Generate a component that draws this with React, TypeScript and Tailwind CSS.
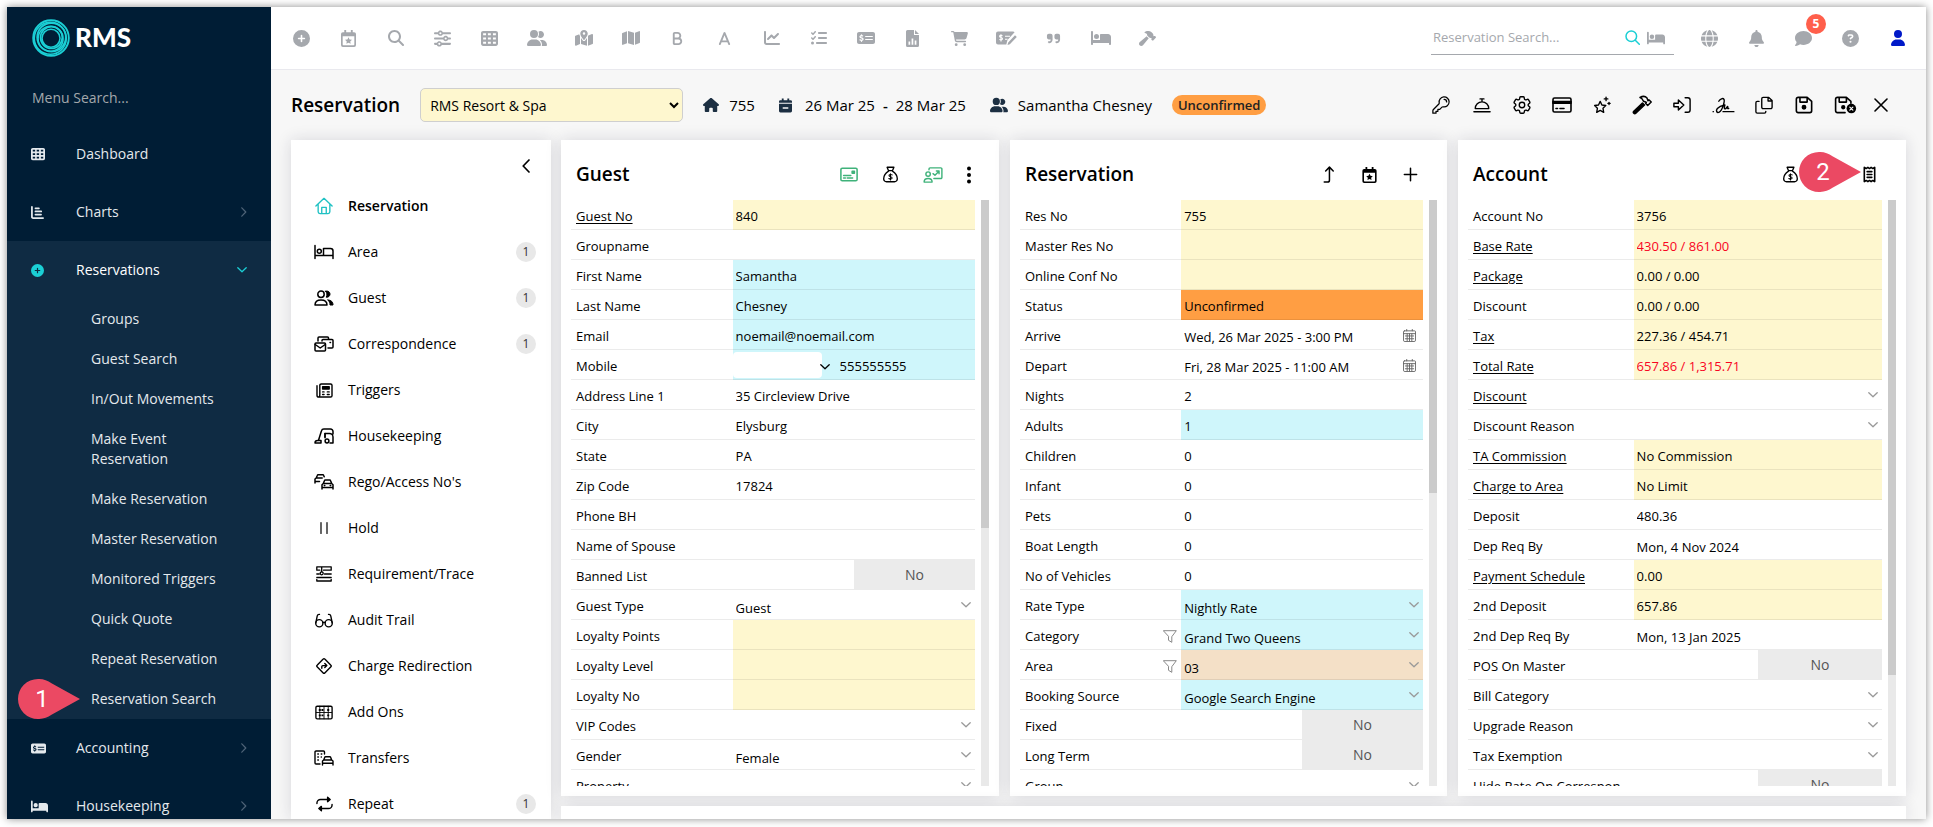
import React from 'react';
import {
    FaA,
    FaB,
    FaBed,
    FaBell,
    FaCartShopping,
    FaChartLine,
    FaCirclePlus,
    FaCircleQuestion,
    FaComment,
    FaGlobe,
    FaHammer,
    FaHouse,
    FaListCheck,
    FaMagnifyingGlass,
    FaMap,
    FaMapLocationDot,
    FaMoneyCheckDollar,
    FaQuoteRight,
    FaSliders,
    FaTableCells,
    FaUser,
    FaUserGroup,
} from 'react-icons/fa6';
import { HiOutlineCog6Tooth, HiOutlineKey } from 'react-icons/hi2';

type IconProps = { className?: string };

// Line icon on a 20x20 grid
const Line: React.FC<{ className?: string; width?: number; box?: string; children: React.ReactNode }> = ({
    className = 'size-5',
    width = 1.5,
    box = '0 0 20 20',
    children,
}) => (
    <svg
        className={className}
        viewBox={box}
        fill="none"
        stroke="currentColor"
        strokeWidth={width}
        strokeLinecap="round"
        strokeLinejoin="round"
        aria-hidden="true"
    >
        {children}
    </svg>
);

const ChevronDown: React.FC<IconProps> = ({ className }) => (
    <Line className={className} box="0 0 10 6" width={1.3}>
        <path d="M.8.8 5 4.8 9.2.8" />
    </Line>
);

const ChevronRight: React.FC<IconProps> = ({ className }) => (
    <Line className={className} box="0 0 6 10" width={1.2}>
        <path d="M.8.8 4.8 5 .8 9.2" />
    </Line>
);

const CalendarStar: React.FC<IconProps> = ({ className }) => (
    <svg className={className} viewBox="0 0 16 18" fill="currentColor" aria-hidden="true">
        <path
            fillRule="evenodd"
            d="M3.5 0h2v2.2h5V0h2v2.2H14a2 2 0 0 1 2 2V16a2 2 0 0 1-2 2H2a2 2 0 0 1-2-2V4.200a2 2 0 0 1 2-2h1.500zM1.800 6.500v9a.7.7 0 0 0 .7.7h11a.7.7 0 0 0 .7-.7v-9zM8 7.600l1.150 2.350 2.550.35-1.850 1.800.45 2.550L8 13.450l-2.300 1.200.45-2.550L4.300 10.300l2.550-.35z"
        />
    </svg>
);

const CalendarMinus: React.FC<IconProps> = ({ className }) => (
    <svg className={className} viewBox="0 0 14 15" fill="currentColor" aria-hidden="true">
        <path fillRule="evenodd" d="M3 0h2v1.800h4V0h2v1.800h1.500A1.500 1.500 0 0 1 14 3.300V4.500H0V3.300a1.500 1.500 0 0 1 1.500-1.500H3zM0 5.500h14v8a1.500 1.500 0 0 1-1.500 1.500h-11A1.500 1.500 0 0 1 0 13.500zm4 4v1.600h6V9.500z" />
    </svg>
);

const FileChart: React.FC<IconProps> = ({ className }) => (
    <svg className={className} viewBox="0 0 13 17" fill="currentColor" aria-hidden="true">
        <path fillRule="evenodd" d="M1.500 0H8v5h5v10.500a1.500 1.500 0 0 1-1.500 1.500h-10A1.500 1.500 0 0 1 0 15.500v-14A1.500 1.500 0 0 1 1.500 0zM9 0l4 4H9zM2.500 11.500v3.200h1.700v-3.200zm3.100-3v6.200h1.700V8.500zm3.100 2v4.200h1.700v-4.200z" />
    </svg>
);

const CheckPen: React.FC<IconProps> = ({ className }) => (
    <svg className={className} viewBox="0 0 21 16" aria-hidden="true">
        <path fill="currentColor" d="M2 1.500h15a2 2 0 0 1 1.600.8L11.500 10l-1.200 4.500H2a2 2 0 0 1-2-2v-9a2 2 0 0 1 2-2zM19 5.200l1.800 1.700-7 7.300-2.300.9.700-2.500z" />
        <path d="M6.500 5.700C5.300 4.900 3.500 5.200 3.600 6.400c.1 1.500 2.900.8 2.900 2.300 0 1.300-2 1.500-3.100.7M5 4.200v7.200M9 6.200h5M9 9.200h2.500" stroke="white" strokeWidth="1.100" fill="none" />
    </svg>
);

const BarsAxis: React.FC<IconProps> = ({ className }) => (
    <Line className={className} box="0 0 14 14" width={1.9}>
        <path d="M1 1v10.500A1.300 1.300 0 0 0 2.300 13H13M4.800 2.500h3.700M4.800 5.800H11M4.800 9.200h6" />
    </Line>
);

const MoneyBag: React.FC<IconProps> = ({ className }) => (
    <Line className={className} width={1.6}>
        <path d="M6 1.500h8L12.300 5.500H7.700zM7.700 6C4.500 8 2 11.500 2 15a3.300 3.300 0 0 0 3.300 3.500h9.400A3.300 3.300 0 0 0 18 15c0-3.500-2.500-7-5.700-9" />
        <path d="M12 10.500c-1.300-1-3.800-.8-3.800.8 0 1.800 3.700 1 3.700 2.700 0 1.500-2.600 1.700-3.900.7M10 9v7.500" strokeWidth="1.200" />
    </Line>
);

const IdCard: React.FC<IconProps> = ({ className }) => (
    <Line className={className} box="0 0 20 16" width={1.7}>
        <rect x="1" y="1" width="18" height="14" rx="1.500" />
        <path d="M4 9.200h8M4 11.800h2M8 11.800h6" />
        <path d="M13.500 4.500h2.500v2h-2.500z" fill="currentColor" />
    </Line>
);

const Presenter: React.FC<IconProps> = ({ className }) => (
    <Line className={className} box="0 0 22 18" width={1.6}>
        <path d="M6.500 3V2.200A1.200 1.200 0 0 1 7.700 1h12.100A1.200 1.200 0 0 1 21 2.200v9.600a1.200 1.200 0 0 1-1.200 1.200H12M11 7.500l2.200 1.800L17.500 5M14.800 4.500h3v3" />
        <circle cx="5.500" cy="8" r="2.500" />
        <path d="M1 17c0-2.500 1.500-4 4.500-4s4.500 1.500 4.500 4z" />
    </Line>
);

const Dots: React.FC<IconProps> = ({ className }) => (
    <svg className={className} viewBox="0 0 4 18" fill="currentColor" aria-hidden="true">
        <circle cx="2" cy="2.500" r="2" />
        <circle cx="2" cy="9" r="2" />
        <circle cx="2" cy="15.500" r="2" />
    </svg>
);

const Receipt: React.FC<IconProps> = ({ className }) => (
    <Line className={className} box="0 0 14 18" width={1.7}>
        <path d="M1.500 1.500l2 1.200 1.800-1.200L7 2.700l1.700-1.200 1.800 1.200 2-1.200v15l-2-1.200-1.800 1.200L7 15.300l-1.700 1.200-1.800-1.200-2 1.200z" />
        <path d="M4.500 6h5M4.500 9h5M4.500 12h5" />
    </Line>
);

const BedOutline: React.FC<IconProps> = ({ className }) => (
    <Line className={className} box="0 0 20 16" width={1.5}>
        <path d="M1 1.500v13M1 11.500h18M19 14.500V7a2.500 2.500 0 0 0-2.500-2.500H9.500v7" />
        <circle cx="5.300" cy="7.200" r="2" />
    </Line>
);

const toolbarIcons: { label: string; icon: React.ReactNode }[] = [
    { label: 'Add', icon: <FaCirclePlus className="size-[17px]" /> },
    { label: 'Events', icon: <CalendarStar className="h-[17px] w-[15px]" /> },
    { label: 'Search', icon: <FaMagnifyingGlass className="size-4" /> },
    { label: 'Filters', icon: <FaSliders className="size-[17px]" /> },
    { label: 'Grid', icon: <FaTableCells className="size-[17px]" /> },
    { label: 'Guests', icon: <FaUserGroup className="size-5" /> },
    { label: 'Locations', icon: <FaMapLocationDot className="size-[18px]" /> },
    { label: 'Map', icon: <FaMap className="size-[18px]" /> },
    { label: 'Book', icon: <FaB className="size-[15px]" /> },
    { label: 'Availability', icon: <FaA className="size-[15px]" /> },
    { label: 'Statistics', icon: <FaChartLine className="size-4" /> },
    { label: 'Tasks', icon: <FaListCheck className="size-4" /> },
    { label: 'Payments', icon: <FaMoneyCheckDollar className="size-[18px]" /> },
    { label: 'Reports', icon: <FileChart className="h-[17px] w-[13px]" /> },
    { label: 'Point of sale', icon: <FaCartShopping className="size-[17px]" /> },
    { label: 'Cheques', icon: <CheckPen className="h-4 w-[21px]" /> },
    { label: 'Quotes', icon: <FaQuoteRight className="size-[15px]" /> },
    { label: 'Rooms', icon: <FaBed className="size-5" /> },
    { label: 'Maintenance', icon: <FaHammer className="size-[17px]" /> },
];

const subMenu = [
    'Groups',
    'Guest Search',
    'In/Out Movements',
    'Make Event Reservation',
    'Make Reservation',
    'Master Reservation',
    'Monitored Triggers',
    'Quick Quote',
    'Repeat Reservation',
    'Reservation Search',
];

const sections: { label: string; count?: number; icon: React.ReactNode }[] = [
    {
        label: 'Reservation',
        icon: (
            <Line className="size-[18px] text-[#1fc1c3]">
                <path d="M1 10 10 1.500 19 10M3.500 8v8.500a2 2 0 0 0 2 2h9a2 2 0 0 0 2-2V8M7.500 18v-6.500h5V18" />
            </Line>
        ),
    },
    { label: 'Area', count: 1, icon: <BedOutline className="h-4 w-5" /> },
    {
        label: 'Guest',
        count: 1,
        icon: (
            <Line className="h-4 w-5" box="0 0 20 16">
                <circle cx="7" cy="4.200" r="3.200" />
                <path d="M1 15c0-3 2-5 6-5s6 2 6 5z" />
                <path d="M11.500 1.200c3.500-.8 4.500 1.500 4.500 3s-1.500 3.500-3.800 3C13.500 5 13 2.500 11.500 1.200zM14 10c3.500.2 5 2 5 5h-3c0-2-.5-3.500-2-5z" fill="currentColor" strokeWidth="1" />
            </Line>
        ),
    },
    {
        label: 'Correspondence',
        count: 1,
        icon: (
            <Line className="h-4 w-5" box="0 0 20 16">
                <path d="M4 5V2a1 1 0 0 1 1-1h8.500a1 1 0 0 1 1 1v1.500M8 5V4.500a1 1 0 0 1 1-1h9a1 1 0 0 1 1 1V11a1 1 0 0 1-1 1h-4M16 6.500h.5" />
                <rect x="1" y="7" width="10.500" height="8" rx="1" />
                <path d="m1.200 8.500 5 3.500 5-3.500" />
            </Line>
        ),
    },
    {
        label: 'Triggers',
        icon: (
            <Line className="h-[15px] w-[17px]" box="0 0 18 16">
                <path d="M1 3v10a2 2 0 0 0 2 2h12.500a1.500 1.500 0 0 0 1.500-1.500v-11A1.500 1.500 0 0 0 15.500 1h-10A1.500 1.500 0 0 0 4 2.500V13a2 2 0 0 1-1.500 2" />
                <path d="M7 4h7v2.500H7z" fill="currentColor" />
                <path d="M7 9.500h1.500M12 9.500h2M7 12.300h1.500M12 12.300h2" />
            </Line>
        ),
    },
    {
        label: 'Housekeeping',
        icon: (
            <Line className="h-4 w-5" box="0 0 20 16">
                <path d="M1 15c0-1.500 1-2.500 2.500-2.500H7V15zM4.500 12.300 7.500 2.800A2.500 2.500 0 0 1 10 1h6.500A2.500 2.500 0 0 1 19 3.500V6M11 9V5.500h4.500A3.500 3.500 0 0 1 19 9v6h-3" />
                <path d="M11 5.500v4.200" />
                <circle cx="13" cy="13" r="1.900" />
            </Line>
        ),
    },
    {
        label: "Rego/Access No's",
        icon: (
            <Line className="h-4 w-5" box="0 0 20 16">
                <path d="M1 9V5l1.200-1L3.300 1.500A1 1 0 0 1 4.200.8h4.500a1 1 0 0 1 1 .7l.5 1.300M2.200 4h6M1 7.500h4.500" />
                <path d="M8 15v-4.300l1.300-1.200 1.100-2.800a1 1 0 0 1 1-.7h4.200a1 1 0 0 1 1 .7l1.100 2.800L19 10.700V15M9.300 9.500h8.400M8 13.500h11M10.300 11.500h.5M16.200 11.500h.5" />
            </Line>
        ),
    },
    {
        label: 'Hold',
        icon: (
            <Line className="h-3 w-2" box="0 0 8 12" width={1.2}>
                <path d="M1 .6v10.800M7 .6v10.800" />
            </Line>
        ),
    },
    {
        label: 'Requirement/Trace',
        icon: (
            <Line className="h-4 w-4" box="0 0 16 16" width={1.3}>
                <path d="M.8.8h14.400M.8 4.200h3M7.500 4.200h7.700M.8 8h2.500M8.500 8h6.700M.8 11.500h14.400M.8 15h14.400M.8.8v3.400M15.200.8v3.400M.8 13.500V15M15.200 13.500V15M5.700 1v4.500" />
                <circle cx="5.700" cy="7.300" r="1.500" />
            </Line>
        ),
    },
    {
        label: 'Audit Trail',
        icon: (
            <Line className="h-[15px] w-[18px]" box="0 0 20 16">
                <circle cx="4.800" cy="11" r="4" />
                <circle cx="15.200" cy="11" r="4" />
                <path d="M.9 10.500 2.500 2.800C2.800 1.500 3.500 1 5 1.200M19.100 10.500 17.500 2.800C17.200 1.500 16.500 1 15 1.200M8.500 10.500c1-.8 2-.8 3 0" />
            </Line>
        ),
    },
    {
        label: 'Charge Redirection',
        icon: (
            <Line className="size-4" box="0 0 16 16" width={1.4}>
                <path d="M7.200 1.100a1.100 1.100 0 0 1 1.600 0l6.100 6.100a1.100 1.100 0 0 1 0 1.600l-6.100 6.100a1.100 1.100 0 0 1-1.600 0L1.100 8.800a1.100 1.100 0 0 1 0-1.600zM5.800 10.300V8.600a1 1 0 0 1 1-1h3.500M8.800 5.600l2 2-2 2" />
            </Line>
        ),
    },
    {
        label: 'Add Ons',
        icon: (
            <Line className="h-[15px] w-[18px]" box="0 0 20 16">
                <rect x="1" y="1" width="18" height="14" rx="1.500" />
                <path d="M5.300 1v14M10 1v14M14.700 1v14M1.500 8h17" strokeWidth="1" />
                <path d="M5.300 4v2.200M5.300 10.300v2M8.300 4v2.200M8.300 10.300v2M14.700 4v2.200M14.700 10.300v2" strokeWidth="2.200" strokeLinecap="butt" />
            </Line>
        ),
    },
    {
        label: 'Transfers',
        icon: (
            <Line className="h-4 w-5" box="0 0 20 16" width={1.4}>
                <path d="M6 14H2a1 1 0 0 1-1-1V2a1 1 0 0 1 1-1h7.500a1 1 0 0 1 1 1v2M3.800 4h.6M7.200 4h.6M3.800 7h.6M7.200 7h.2M3.800 10h.6" />
                <path d="M8.500 15v-4l1.200-1 1-2.600a1 1 0 0 1 1-.6h4a1 1 0 0 1 1 .6l1 2.600 1.300 1v4M9.700 10h8M8.500 13.300H19" />
            </Line>
        ),
    },
    {
        label: 'Repeat',
        count: 1,
        icon: (
            <Line className="h-4 w-[17px]" box="0 0 18 16">
                <path d="M1 7.500V7a3.800 3.800 0 0 1 3.800-3.800H13M17 8.500V9a3.800 3.800 0 0 1-3.800 3.800H5" />
                <path d="M12.300.9 15 3.200l-2.700 2.300zM5.700 10.500 3 12.800l2.700 2.300z" fill="currentColor" />
            </Line>
        ),
    },
];

const actions: { label: string; slot: string; icon: React.ReactNode }[] = [
    { label: 'Key', slot: 'w-[42px]', icon: <HiOutlineKey className="size-5" /> },
    {
        label: 'Concierge',
        slot: 'w-10',
        icon: (
            <Line className="h-[18px] w-[18px]">
                <path d="M1 17.500h18M2.500 14a7.500 7.500 0 0 1 15 0zM10 6.300V3.500M7.800 3.200h4.400" />
            </Line>
        ),
    },
    { label: 'Settings', slot: 'w-10', icon: <HiOutlineCog6Tooth className="size-[22px]" /> },
    {
        label: 'Card',
        slot: 'w-10',
        icon: (
            <Line className="h-4 w-5" box="0 0 20 16" width={1.6}>
                <rect x="1" y="1" width="18" height="14" rx="1.500" />
                <path d="M1 4.500h18v1.800H1zM4 11.500h1.500M8 11.500h4" fill="currentColor" />
            </Line>
        ),
    },
    {
        label: 'Specials',
        slot: 'w-10',
        icon: (
            <Line className="h-[18px] w-[18px]">
                <path d="m8 6 1.900 4 4.300.6-3.100 3.100.8 4.500L8 16l-3.900 2.200.8-4.500-3.100-3.100 4.300-.6z" />
                <path d="M14.500 1.200v4M12.500 3.200h4M17.800 7v2.400M16.600 8.200H19" />
            </Line>
        ),
    },
    {
        label: 'Maintenance',
        slot: 'w-10',
        icon: (
            <Line className="size-5">
                <path d="M8 2.500c3-1.700 5.500-1.200 7 .5l1 2.700 1.200-.7 2 2-3.500 3.500-2-2 .6-1.200-2.800-1C10.700 4.300 10 3 8 2.500z" />
                <path d="m10.500 8 2 2-8.700 8.300a1.300 1.300 0 0 1-2-2z" fill="currentColor" />
            </Line>
        ),
    },
    {
        label: 'Check in',
        slot: 'w-10',
        icon: (
            <Line className="size-[18px]" width={1.6}>
                <path d="M13.500 2h3a2.500 2.500 0 0 1 2.500 2.500v11a2.500 2.500 0 0 1-2.500 2.500h-3M1 8v4h5v3.500L12 10 6 4.500V8z" />
            </Line>
        ),
    },
    {
        label: 'Signature',
        slot: 'w-[42px]',
        icon: (
            <Line className="h-[17px] w-[23px]" box="0 0 24 18">
                <path d="M1 15.500h.3M7 4.500C8.500 2 11.500.8 12.500 2.500S11 14 7.500 16c-2.500 1.200-4-1.500-2-3.800C8 9.500 12 8.800 13.500 8.500 12.500 11 12.700 13 14 12.500s1.500-2 2.500-2.500c-.5 2 0 2.800 1 2M11.500 15.500H23" />
            </Line>
        ),
    },
    {
        label: 'Copy',
        slot: 'w-10',
        icon: (
            <Line className="size-[18px]">
                <path d="M9 1.500h6L19 5v7.500a1.500 1.500 0 0 1-1.500 1.500H9a1.500 1.500 0 0 1-1.500-1.500V3A1.500 1.500 0 0 1 9 1.500zM14.500 1.800V5.500h4M4.500 6h-2A1.500 1.500 0 0 0 1 7.500v10A1.500 1.500 0 0 0 2.500 19h8a1.500 1.500 0 0 0 1.500-1.500v-.5" />
            </Line>
        ),
    },
    {
        label: 'Save',
        slot: 'w-10',
        icon: (
            <Line className="size-[18px]" width={1.8}>
                <path d="M3.500 1.500h10L18.500 6v10.500a2 2 0 0 1-2 2h-13a2 2 0 0 1-2-2v-13a2 2 0 0 1 2-2zM5.500 1.800v5h8v-5" />
                <circle cx="10" cy="12.500" r="1.800" fill="currentColor" />
            </Line>
        ),
    },
    {
        label: 'Save and close',
        slot: 'w-[42px]',
        icon: (
            <Line className="h-[18px] w-[23px]" box="0 0 25 20" width={1.8}>
                <path d="M12 18.500H3.500a2 2 0 0 1-2-2v-13a2 2 0 0 1 2-2h10L18.500 6v2M5.500 1.800v5h8v-5" />
                <circle cx="10" cy="12.500" r="1.500" fill="currentColor" />
                <circle cx="19" cy="14" r="5.300" fill="currentColor" stroke="none" />
                <path d="m17.300 12.300 3.400 3.400M20.700 12.300l-3.400 3.400" stroke="white" strokeWidth="1.300" />
            </Line>
        ),
    },
    {
        label: 'Close',
        slot: 'w-[30px]',
        icon: (
            <Line className="size-[14px]" box="0 0 14 14" width={1.6}>
                <path d="M1 1l12 12M13 1 1 13" />
            </Line>
        ),
    },
];

type Tone = 'plain' | 'yellow' | 'cyan' | 'orange' | 'peach';
type Field = {
    label: string;
    value?: string;
    tone?: Tone;
    kind?: 'text' | 'select' | 'toggle' | 'date' | 'phone';
    link?: boolean;
    red?: boolean;
    filter?: boolean;
    picker?: boolean;
};

const tones: Record<Tone, string> = {
    plain: 'bg-white',
    yellow: 'bg-[#fef7cf]',
    cyan: 'bg-[#cff6fb]',
    orange: 'bg-[#ff9e43]',
    peach: 'bg-[#f4e0c7]',
};

const guestFields: Field[] = [
    { label: 'Guest No', value: '840', tone: 'yellow', link: true },
    { label: 'Groupname' },
    { label: 'First Name', value: 'Samantha', tone: 'cyan' },
    { label: 'Last Name', value: 'Chesney', tone: 'cyan' },
    { label: 'Email', value: 'noemail@noemail.com', tone: 'cyan' },
    { label: 'Mobile', value: '555555555', tone: 'cyan', kind: 'phone' },
    { label: 'Address Line 1', value: '35 Circleview Drive' },
    { label: 'City', value: 'Elysburg' },
    { label: 'State', value: 'PA' },
    { label: 'Zip Code', value: '17824' },
    { label: 'Phone BH' },
    { label: 'Name of Spouse' },
    { label: 'Banned List', value: 'No', kind: 'toggle' },
    { label: 'Guest Type', value: 'Guest', kind: 'select' },
    { label: 'Loyalty Points', tone: 'yellow' },
    { label: 'Loyalty Level', tone: 'yellow' },
    { label: 'Loyalty No', tone: 'yellow' },
    { label: 'VIP Codes', kind: 'select' },
    { label: 'Gender', value: 'Female', kind: 'select' },
    { label: 'Property', kind: 'select' },
];

const reservationFields: Field[] = [
    { label: 'Res No', value: '755', tone: 'yellow' },
    { label: 'Master Res No', tone: 'yellow' },
    { label: 'Online Conf No', tone: 'yellow' },
    { label: 'Status', value: 'Unconfirmed', tone: 'orange' },
    { label: 'Arrive', value: 'Wed, 26 Mar 2025 - 3:00 PM', kind: 'date', picker: true },
    { label: 'Depart', value: 'Fri, 28 Mar 2025 - 11:00 AM', kind: 'date', picker: true },
    { label: 'Nights', value: '2' },
    { label: 'Adults', value: '1', tone: 'cyan' },
    { label: 'Children', value: '0' },
    { label: 'Infant', value: '0' },
    { label: 'Pets', value: '0' },
    { label: 'Boat Length', value: '0' },
    { label: 'No of Vehicles', value: '0' },
    { label: 'Rate Type', value: 'Nightly Rate', tone: 'cyan', kind: 'select' },
    { label: 'Category', value: 'Grand Two Queens', tone: 'cyan', kind: 'select', filter: true },
    { label: 'Area', value: '03', tone: 'peach', kind: 'select', filter: true },
    { label: 'Booking Source', value: 'Google Search Engine', tone: 'cyan', kind: 'select' },
    { label: 'Fixed', value: 'No', kind: 'toggle' },
    { label: 'Long Term', value: 'No', kind: 'toggle' },
    { label: 'Group', kind: 'select' },
];

const accountFields: Field[] = [
    { label: 'Account No', value: '3756', tone: 'yellow' },
    { label: 'Base Rate', value: '430.50 / 861.00', tone: 'yellow', link: true, red: true },
    { label: 'Package', value: '0.00 / 0.00', tone: 'yellow', link: true },
    { label: 'Discount', value: '0.00 / 0.00', tone: 'yellow' },
    { label: 'Tax', value: '227.36 / 454.71', tone: 'yellow', link: true },
    { label: 'Total Rate', value: '657.86 / 1,315.71', tone: 'yellow', link: true, red: true },
    { label: 'Discount', kind: 'select', link: true },
    { label: 'Discount Reason', kind: 'select' },
    { label: 'TA Commission', value: 'No Commission', tone: 'yellow', link: true },
    { label: 'Charge to Area', value: 'No Limit', tone: 'yellow', link: true },
    { label: 'Deposit', value: '480.36' },
    { label: 'Dep Req By', value: 'Mon, 4 Nov 2024', kind: 'date' },
    { label: 'Payment Schedule', value: '0.00', tone: 'yellow', link: true },
    { label: '2nd Deposit', value: '657.86', tone: 'yellow' },
    { label: '2nd Dep Req By', value: 'Mon, 13 Jan 2025', kind: 'date' },
    { label: 'POS On Master', value: 'No', kind: 'toggle' },
    { label: 'Bill Category', kind: 'select' },
    { label: 'Upgrade Reason', kind: 'select' },
    { label: 'Tax Exemption', kind: 'select' },
    { label: 'Hide Rate On Correspon', value: 'No', kind: 'toggle' },
];

const Control: React.FC<{ field: Field; id: string; labelId: string }> = ({ field, id, labelId }) => {
    const { kind = 'text', value = '' } = field;

    if (kind === 'toggle') {
        return (
            <button id={id} aria-labelledby={labelId + ' ' + id} className="ml-auto h-full w-1/2 bg-[#ebebeb] pt-px text-sm text-[#555]">
                {value}
            </button>
        );
    }

    if (kind === 'select') {
        return (
            <>
                <select
                    id={id}
                    aria-labelledby={labelId}
                    defaultValue={value}
                    className="h-full w-full appearance-none bg-transparent px-[3px] pt-2 outline-none"
                >
                    <option value={value}>{value}</option>
                </select>
                <ChevronDown className="pointer-events-none -ml-[14px] mr-1 h-[6px] w-[10px] shrink-0 text-[#999]" />
            </>
        );
    }

    if (kind === 'phone') {
        return (
            <>
                <select aria-label="Country code" className="h-[26px] w-[89px] shrink-0 appearance-none rounded bg-white outline-none">
                    <option value="" />
                </select>
                <ChevronDown className="pointer-events-none -ml-[2px] mt-1 h-[6px] w-[10px] shrink-0" />
                <input
                    id={id}
                    aria-labelledby={labelId}
                    defaultValue={value}
                    className="h-full w-full min-w-0 bg-transparent pl-[10px] pt-[3px] outline-none"
                />
            </>
        );
    }

    return (
        <>
            <input
                id={id}
                aria-labelledby={labelId}
                defaultValue={value}
                className={`h-full w-full min-w-0 bg-transparent px-[3px] outline-none ${kind === 'date' ? 'pt-[5px]' : 'pt-[3px]'} ${
                    field.red ? 'text-[#f8051f]' : ''
                }`}
            />
            {field.picker && (
                <button aria-label="Pick date" className="mr-[7px] mt-[2px] shrink-0 text-[#666]">
                    <Line className="size-[13px]" box="0 0 14 14" width={1}>
                        <path d="M1.500 2h11a1 1 0 0 1 1 1v9a1.500 1.500 0 0 1-1.500 1.500H2A1.500 1.500 0 0 1 .5 12V3a1 1 0 0 1 1-1zM.5 5h13M4 .5V2M10 .5V2M2.500 7.500h9M2.500 10.500h9M4.500 5v8M7 5v8M9.500 5v8" />
                    </Line>
                </button>
            )}
        </>
    );
};

const Panel: React.FC<{ title: string; fields: Field[]; thumb: string; children: React.ReactNode }> = ({
    title,
    fields,
    thumb,
    children,
}) => (
    <section className="flex min-h-0 min-w-0 flex-col bg-white pb-[10px] shadow-[0_0_15px_rgba(30,30,60,0.14)]">
        <header className="flex h-[60px] shrink-0 items-center pl-[15px] pr-7 pt-[9px]">
            <h2 className="text-[19px] font-semibold">{title}</h2>
            <div className="ml-auto flex items-center gap-6">{children}</div>
        </header>
        <div className="flex min-h-0 flex-1 gap-[6px] px-[10px]">
            <div className="min-w-0 flex-1 overflow-hidden text-[13px]">
                {fields.map((field, index) => {
                    const id = `${title}-${index}`.toLowerCase();
                    const labelId = `${id}-label`;
                    return (
                        <div key={id} className="flex h-[30px]">
                            <div className="flex w-2/5 items-center border-b border-black/8 pl-[5px] pt-[4px]">
                                {field.link ? (
                                    <a id={labelId} href="#" className="whitespace-nowrap underline underline-offset-2">
                                        {field.label}
                                    </a>
                                ) : (
                                    <label id={labelId} htmlFor={id} className="whitespace-nowrap">
                                        {field.label}
                                    </label>
                                )}
                                {field.filter && (
                                    <button aria-label="Filter" className="ml-auto mr-1 text-[#888]">
                                        <Line className="h-[13px] w-[14px]" box="0 0 14 13" width={1}>
                                            <path d="M.7.700h12.600L8.800 6.700v5.600L5.500 10.300V6.700z" />
                                        </Line>
                                    </button>
                                )}
                            </div>
                            <div className={`flex w-3/5 items-center border-b border-black/8 ${tones[field.tone || 'plain']}`}>
                                <Control field={field} id={id} labelId={labelId} />
                            </div>
                        </div>
                    );
                })}
            </div>
            {/* Scroll track */}
            <div className="w-2 shrink-0 bg-[#e9e9e9]">
                <div className={`bg-[#cbcbcb] ${thumb}`} />
            </div>
        </div>
    </section>
);

const Pin: React.FC<{ step: number; className: string }> = ({ step, className }) => (
    <span className={`pointer-events-none absolute z-10 flex h-10 w-[62px] items-center ${className}`}>
        <svg className="absolute inset-0 size-full" viewBox="0 0 62 40" fill="#eb4963" aria-hidden="true">
            <path d="M62 20 33.500 4.200A22 22 0 0 0 20 0a20 20 0 0 0 0 40 22 22 0 0 0 13.500-4.200z" />
        </svg>
        <span className="relative w-[48px] text-center font-[Roboto,sans-serif] text-2xl text-white">{step}</span>
    </span>
);

const MenuRow: React.FC<{ label: string; icon: React.ReactNode; arrow?: React.ReactNode; active?: boolean }> = ({
    label,
    icon,
    arrow,
    active,
}) => (
    <a href="#" className={`flex h-[58px] shrink-0 items-center pl-6 pr-6 ${active ? 'text-white' : 'text-[#e4e9ed]'}`}>
        <span className="w-[45px]">{icon}</span>
        {label}
        <span className="ml-auto">{arrow}</span>
    </a>
);

const Sidebar: React.FC = () => (
    <aside className="flex w-[264px] shrink-0 flex-col overflow-hidden bg-[#001d35] text-sm text-[#e4e9ed]">
        <div className="flex h-[62px] shrink-0 items-center gap-1 pl-6">
            <svg className="size-10" viewBox="0 0 40 40" fill="none" stroke="#1bcfd5" aria-hidden="true">
                <circle cx="20" cy="20" r="17.800" strokeWidth="1.900" />
                <circle cx="19.300" cy="20.300" r="16" strokeWidth="1.500" />
                <circle cx="20.500" cy="19.300" r="14.300" strokeWidth="1.800" />
                <circle cx="19.600" cy="20.700" r="12.500" strokeWidth="1.500" />
                <circle cx="20.400" cy="19.600" r="10.900" strokeWidth="1.700" />
                <circle cx="20" cy="20.200" r="9" strokeWidth="1.600" />
            </svg>
            <span className="font-[Lato,sans-serif] text-[26px] font-black text-white">RMS</span>
        </div>
        <div className="flex h-14 shrink-0 items-center pl-[25px] pt-px">
            <input
                aria-label="Menu Search"
                placeholder="Menu Search..."
                className="w-full bg-transparent outline-none placeholder:text-[#a3a8ac]"
            />
        </div>
        <nav className="flex flex-col">
            <MenuRow label="Dashboard" icon={<FaTableCells className="size-[14px]" />} />
            <MenuRow
                label="Charts"
                icon={<BarsAxis className="size-[13px]" />}
                arrow={<ChevronRight className="h-[10px] w-[6px] text-[#4f6478]" />}
            />
            <div className="bg-[#0f2b43]">
                <MenuRow
                    label="Reservations"
                    active
                    icon={<FaCirclePlus className="size-[13px] text-[#1bcfd5]" />}
                    arrow={<ChevronDown className="h-[6px] w-[10px] text-[#1bcfd5]" />}
                />
                <ul>
                    {subMenu.map((item) => (
                        <li key={item} className="relative">
                            {item === 'Reservation Search' && <Pin step={1} className="left-[11px] top-0" />}
                            <a href="#" className="block py-[10px] pl-[84px] pr-12 leading-5">
                                {item}
                            </a>
                        </li>
                    ))}
                </ul>
            </div>
            <MenuRow
                label="Accounting"
                icon={<FaMoneyCheckDollar className="size-[15px]" />}
                arrow={<ChevronRight className="h-[10px] w-[6px] text-[#4f6478]" />}
            />
            <MenuRow
                label="Housekeeping"
                icon={<FaBed className="size-[17px]" />}
                arrow={<ChevronRight className="h-[10px] w-[6px] text-[#4f6478]" />}
            />
        </nav>
    </aside>
);

const TopBar: React.FC = () => (
    <header className="flex h-[63px] shrink-0 items-center border-b border-[#e9e9ee] bg-white pl-[7px] pr-[5px] text-[#a5a8ad]">
        {toolbarIcons.map((item) => (
            <button key={item.label} aria-label={item.label} className="flex w-[47px] justify-center">
                {item.icon}
            </button>
        ))}
        <div className="mb-[14px] ml-auto mr-3 flex h-8 w-[243px] items-center self-end border-b border-[#a5a8ad] pb-[2px] pl-[2px] pr-[9px]">
            <input
                aria-label="Reservation Search"
                placeholder="Reservation Search..."
                className="min-w-0 flex-1 bg-transparent text-[13px] outline-none placeholder:text-[#a5a8ad]"
            />
            <button aria-label="Run search" className="text-[#1bcfd5]">
                <Line className="size-[15px]" box="0 0 15 15" width={1.5}>
                    <circle cx="6.300" cy="6.300" r="5.300" />
                    <path d="m10.300 10.300 4 4" />
                </Line>
            </button>
            <FaBed className="ml-[7px] size-[18px]" />
        </div>
        <button aria-label="Language" className="flex w-[47px] justify-center">
            <FaGlobe className="size-[17px]" />
        </button>
        <button aria-label="Notifications" className="flex w-[47px] justify-center">
            <FaBell className="size-[17px]" />
        </button>
        <button aria-label="Messages" className="relative flex w-[47px] justify-center">
            <FaComment className="size-[17px]" />
            <span className="absolute -top-4 left-[26px] flex size-5 items-center justify-center rounded-full bg-[#ff5f4b] text-xs font-bold text-white">
                5
            </span>
        </button>
        <button aria-label="Help" className="flex w-[47px] justify-center">
            <FaCircleQuestion className="size-[17px]" />
        </button>
        <button aria-label="Profile" className="flex w-[47px] justify-center text-[#0019c8]">
            <FaUser className="size-4" />
        </button>
    </header>
);

const SummaryBar: React.FC = () => (
    <div className="flex h-[70px] shrink-0 items-center whitespace-nowrap pl-5 pr-[30px] text-[15px]">
        <h1 className="text-[19px] font-semibold">Reservation</h1>
        <select
            aria-label="Property"
            className="ml-5 h-[34px] w-[263px] rounded-[5px] border border-[#cfcfcf] bg-[#fef7cf] px-[5px] text-sm"
        >
            <option>RMS Resort &amp; Spa</option>
        </select>
        <FaHouse className="ml-5 size-4 text-[#1c2f42]" />
        <span className="ml-[10px]">755</span>
        <CalendarMinus className="ml-6 h-[15px] w-[13px] text-[#1c2f42]" />
        <span className="ml-[13px]">26 Mar 25</span>
        <span className="mx-2 font-semibold">-</span>
        <span>28 Mar 25</span>
        <FaUserGroup className="ml-6 size-[18px] text-[#1c2f42]" />
        <span className="ml-[10px]">Samantha Chesney</span>
        <span className="ml-5 rounded-full bg-[#ff9e43] px-[6px] text-[13px] font-semibold leading-5 text-[#222]">Unconfirmed</span>
        <div className="ml-auto flex items-center">
            {actions.map((action) => (
                <button key={action.label} aria-label={action.label} className={`flex justify-center ${action.slot}`}>
                    {action.icon}
                </button>
            ))}
        </div>
    </div>
);

const SectionNav: React.FC = () => (
    <nav className="w-[260px] shrink-0 overflow-hidden bg-white text-sm shadow-[0_0_15px_rgba(30,30,60,0.14)]">
        <div className="flex h-[43px] justify-end pr-[21px] pt-[19px]">
            <button aria-label="Collapse" className="h-[14px]">
                <Line className="h-[14px] w-2" box="0 0 8 14" width={1.7}>
                    <path d="M7 1 1.200 7 7 13" />
                </Line>
            </button>
        </div>
        {sections.map((section, index) => (
            <a key={section.label} href="#" className={`flex h-[46px] items-center pl-[23px] pr-[15px] ${index === 0 ? 'font-semibold' : ''}`}>
                <span className="mr-[14px] flex w-5 justify-center">{section.icon}</span>
                {section.label}
                {section.count && (
                    <span className="ml-auto flex size-5 items-center justify-center rounded-full bg-[#e8e8e8] text-xs text-[#333]">
                        {section.count}
                    </span>
                )}
            </a>
        ))}
    </nav>
);

const App: React.FC = () => {
    return (
        <div className="h-screen bg-white px-[7px] pb-2 pt-[7px] font-['Open_Sans',sans-serif] text-black">
            <div className="flex h-full overflow-hidden bg-[#f7f7f7] shadow-[0_0_8px_rgba(0,0,0,0.45)]">
                <Sidebar />
                <main className="flex min-w-0 flex-1 flex-col">
                    <TopBar />
                    <SummaryBar />
                    <div className="flex min-h-0 flex-1 gap-[10px] pl-5 pr-5">
                        <SectionNav />
                        <div className="flex min-h-0 min-w-0 flex-1 flex-col gap-[10px]">
                            <div className="grid min-h-0 flex-1 grid-cols-[438fr_437fr_448fr] grid-rows-1 gap-[11px]">
                                <Panel title="Guest" fields={guestFields} thumb="h-[56%]">
                                    <button aria-label="Guest card" className="text-[#3fb27a]">
                                        <IdCard className="h-[15px] w-[18px]" />
                                    </button>
                                    <button aria-label="Guest account">
                                        <MoneyBag className="size-[17px]" />
                                    </button>
                                    <button aria-label="Guest history" className="text-[#3fb27a]">
                                        <Presenter className="h-4 w-5" />
                                    </button>
                                    <button aria-label="More">
                                        <Dots className="h-[18px] w-1" />
                                    </button>
                                </Panel>
                                <Panel title="Reservation" fields={reservationFields} thumb="h-1/2">
                                    <button aria-label="Move up">
                                        <Line className="size-[17px]" box="0 0 18 18" width={1.6}>
                                            <path d="M4.500 17H8a2 2 0 0 0 2-2V1.200M6 5.200l4-4 4 4" />
                                        </Line>
                                    </button>
                                    <button aria-label="Events">
                                        <CalendarStar className="h-4 w-[17px]" />
                                    </button>
                                    <button aria-label="Add">
                                        <Line className="size-[17px]" box="0 0 18 18" width={1.6}>
                                            <path d="M9 2.500v13M2.500 9h13" />
                                        </Line>
                                    </button>
                                </Panel>
                                <Panel title="Account" fields={accountFields} thumb="h-[81%]">
                                    <button aria-label="Take payment" className="mr-[38px]">
                                        <MoneyBag className="size-[17px]" />
                                    </button>
                                    <button aria-label="Receipts" className="relative">
                                        <Receipt className="h-[17px] w-[17px]" />
                                        <Pin step={2} className="-top-[14px] right-full" />
                                    </button>
                                </Panel>
                            </div>
                            <div className="h-[13px] shrink-0 bg-white shadow-[0_0_15px_rgba(30,30,60,0.14)]" />
                        </div>
                    </div>
                </main>
            </div>
        </div>
    );
};

export default App;
